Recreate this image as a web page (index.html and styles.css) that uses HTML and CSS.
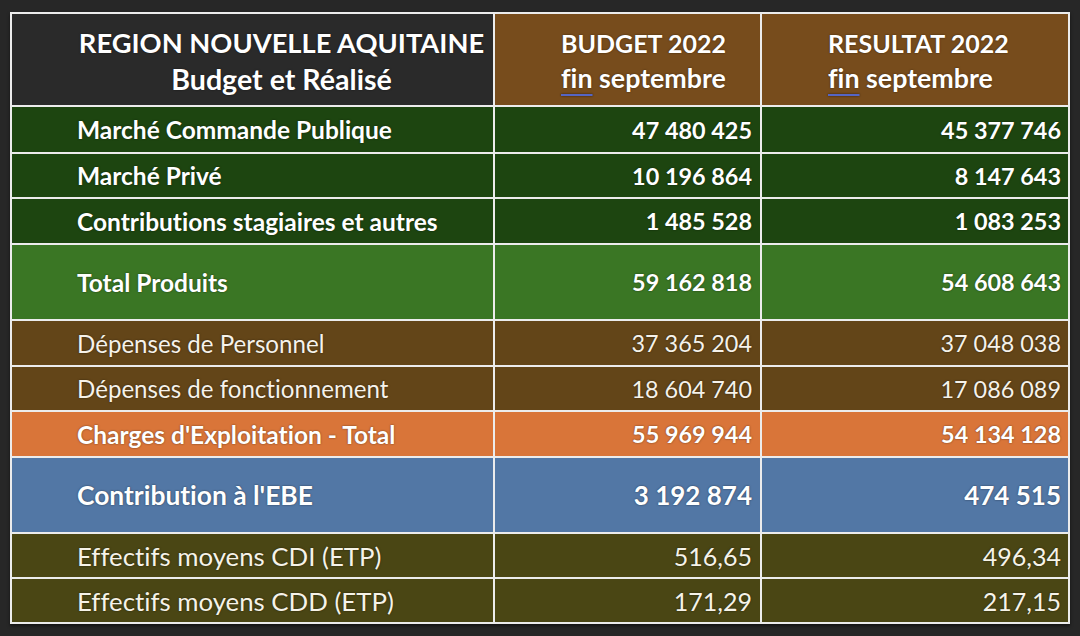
FILE: index.html
```html
<!DOCTYPE html>
<html lang="fr">
<head>
<meta charset="utf-8">
<title>Region Nouvelle Aquitaine - Budget et Réalisé</title>
<link rel="stylesheet" href="styles.css">
</head>
<body>
<div class="sheet">
  <div class="cell head head-title"><span>REGION NOUVELLE AQUITAINE</span><span class="sub">Budget et Réalisé</span></div>
  <div class="cell head head-col"><span>BUDGET 2022</span><span class="sub"><span class="spell">fin</span> septembre</span></div>
  <div class="cell head head-col"><span>RESULTAT 2022</span><span class="sub"><span class="spell">fin</span> septembre</span></div>

  <div class="cell lbl produit bold">Marché Commande Publique</div>
  <div class="cell num produit bold">47 480 425</div>
  <div class="cell num produit bold last">45 377 746</div>

  <div class="cell lbl produit bold">Marché Privé</div>
  <div class="cell num produit bold">10 196 864</div>
  <div class="cell num produit bold last">8 147 643</div>

  <div class="cell lbl produit bold">Contributions stagiaires et autres</div>
  <div class="cell num produit bold">1 485 528</div>
  <div class="cell num produit bold last">1 083 253</div>

  <div class="cell lbl total bold">Total Produits</div>
  <div class="cell num total bold">59 162 818</div>
  <div class="cell num total bold last">54 608 643</div>

  <div class="cell lbl depense">Dépenses de Personnel</div>
  <div class="cell num depense">37 365 204</div>
  <div class="cell num depense last">37 048 038</div>

  <div class="cell lbl depense">Dépenses de fonctionnement</div>
  <div class="cell num depense">18 604 740</div>
  <div class="cell num depense last">17 086 089</div>

  <div class="cell lbl charges bold">Charges d'Exploitation - Total</div>
  <div class="cell num charges bold">55 969 944</div>
  <div class="cell num charges bold last">54 134 128</div>

  <div class="cell lbl ebe bold">Contribution à l'EBE</div>
  <div class="cell num ebe bold">3 192 874</div>
  <div class="cell num ebe bold last">474 515</div>

  <div class="cell lbl effectif">Effectifs moyens CDI (ETP)</div>
  <div class="cell num effectif">516,65</div>
  <div class="cell num effectif last">496,34</div>

  <div class="cell lbl effectif">Effectifs moyens CDD (ETP)</div>
  <div class="cell num effectif">171,29</div>
  <div class="cell num effectif last">217,15</div>
</div>
</body>
</html>
```

FILE: styles.css
```css
html, body {
  margin: 0;
  padding: 0;
}

body {
  background: #272727;
  width: 1080px;
  height: 636px;
  overflow: hidden;
  font-family: "Lato", "Open Sans", sans-serif;
  font-variant-ligatures: none;
  font-feature-settings: "liga" 0, "clig" 0;
  color: #ffffff;
}

.sheet {
  margin: 12px 0 0 10px;
  width: 1060px;
  box-sizing: border-box;
  display: grid;
  grid-template-columns: 481px 265px 306px;
  grid-template-rows: 91px 45px 43px 44px 74px 44px 43px 44px 74px 43px 43px;
  gap: 2px;
  padding: 2px;
  background: #ececec;
  box-shadow: 0 2px 3px rgba(0, 0, 0, 0.5);
}

.cell {
  display: flex;
  align-items: center;
  font-size: 23.4px;
  text-shadow: 0 0 2px rgba(0, 0, 0, 0.55);
  white-space: nowrap;
}

.bold {
  font-weight: 700;
}

.lbl {
  padding-left: 65px;
  font-size: 24.1px;
}

.lbl.bold {
  font-size: 24.5px;
}

.num {
  justify-content: flex-end;
  padding-right: 8px;
}

.num.last {
  padding-right: 7px;
}

/* Header */
.head {
  flex-direction: column;
  justify-content: center;
  font-weight: 700;
}

.head-title {
  background: #2a2a2a;
  align-items: center;
  padding: 2px 4px 0 62px;
  font-size: 27.3px;
  line-height: 37px;
}

.head-title .sub {
  font-size: 28.6px;
}

.head-col {
  background: #774c1c;
  align-items: flex-start;
  padding: 2px 0 0 66px;
  font-size: 25px;
  line-height: 35px;
}

.head-col .sub {
  font-size: 26.8px;
}

.spell {
  text-decoration: underline;
  text-decoration-color: #5565c4;
  text-decoration-thickness: 2px;
  text-underline-offset: 6px;
}

/* Row colours */
.produit {
  background: #1d4510;
}

.total {
  background: #3a7624;
}

.depense {
  background: #634518;
  color: #f6f2ea;
}

.charges {
  background: #d97539;
}

.ebe {
  background: #5277a5;
  font-size: 26px;
}

.lbl.ebe {
  font-size: 26.4px;
}

.effectif {
  background: #4a4614;
  font-size: 25px;
  color: #f6f3e8;
}

.lbl.effectif {
  font-size: 25.8px;
}
```
